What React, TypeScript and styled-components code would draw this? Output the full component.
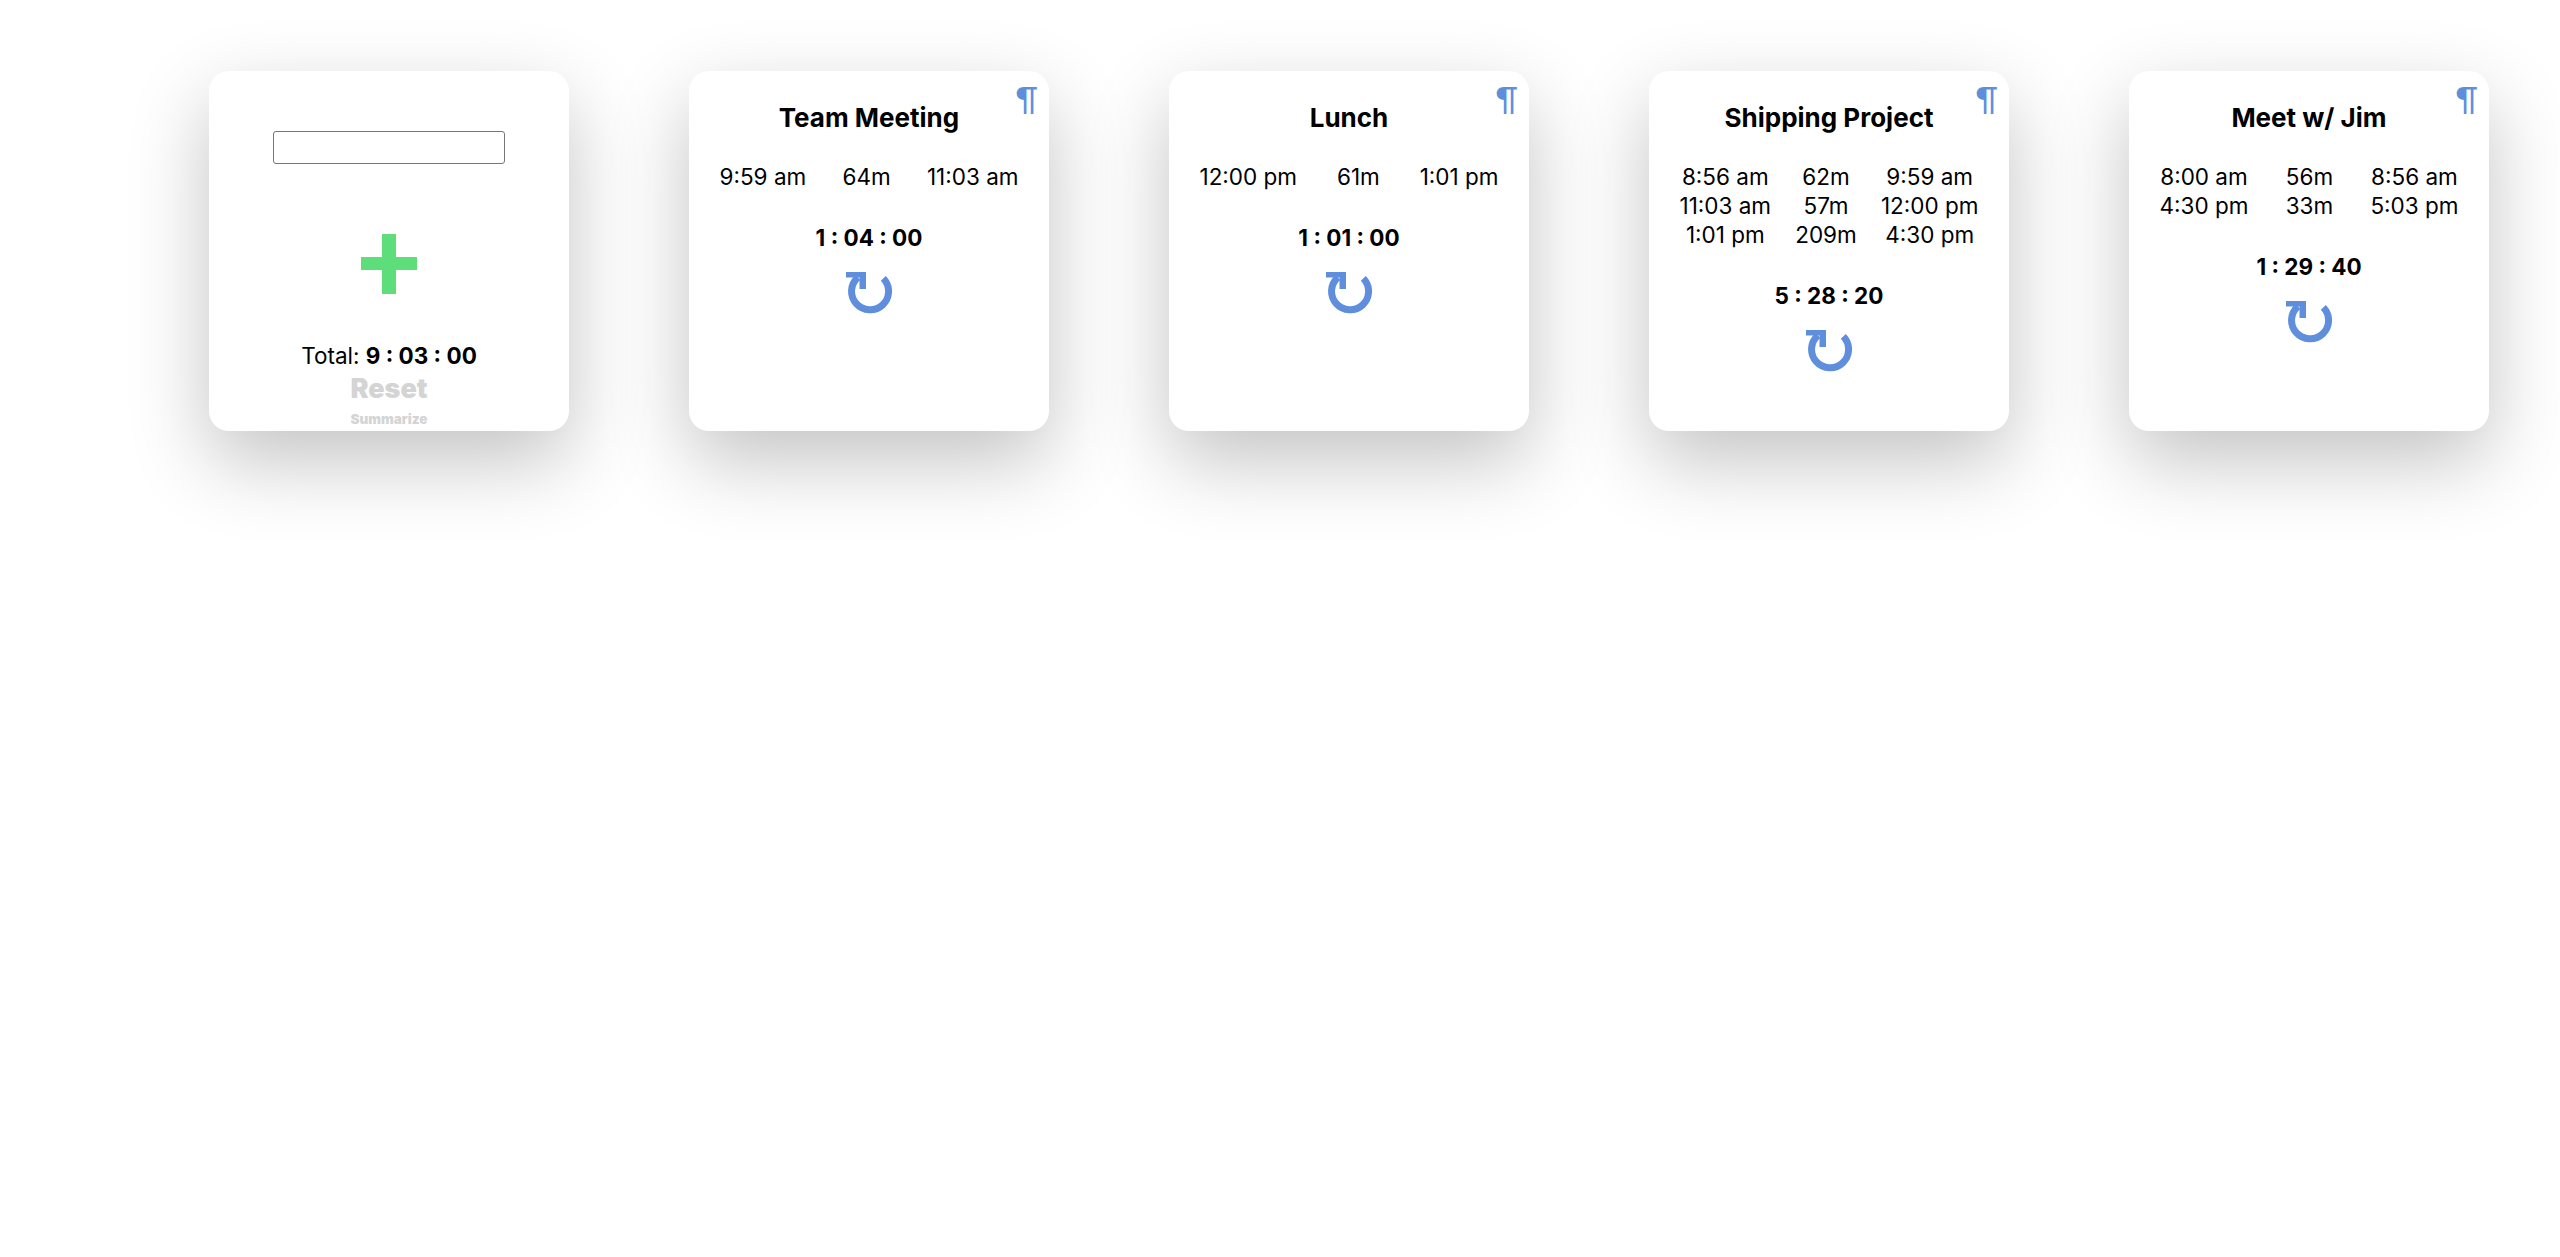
import React from "react";
import styled, { createGlobalStyle } from "styled-components";

const Global = createGlobalStyle`
  html, body, #root { margin: 0; padding: 0; background: #fff; min-height: 100vh; }
  body { font-family: Inter, Lato, sans-serif; color: #000; }
`;

const Board = styled.main`
  display: flex;
  gap: 120px;
  padding: 71px 0 0 209px;
`;

const Card = styled.section`
  position: relative;
  box-sizing: border-box;
  width: 360px;
  height: 360px;
  border-radius: 20px;
  background: #fff;
  box-shadow: 0 30px 80px rgba(0, 0, 0, 0.24);
  display: flex;
  flex-direction: column;
  align-items: center;
`;

const NameInput = styled.input`
  box-sizing: border-box;
  width: 232px;
  height: 33px;
  margin-top: 60px;
  border: 1px solid #767676;
  border-radius: 3px;
  padding: 1px 2px;
  background: #fff;
`;

const AddIcon = styled.svg`
  display: block;
  width: 56px;
  height: 60px;
  margin-top: 70px;
`;

const TotalLine = styled.div`
  margin-top: 47px;
  font-size: 22.5px;
  line-height: 29px;
`;

const Strong = styled.strong`
  font-weight: 700;
`;

const ResetText = styled.div`
  margin-top: 2px;
  font-size: 27px;
  line-height: 34px;
  font-weight: 900;
  color: #d4d4d4;
`;

const SummarizeText = styled.div`
  font-size: 13.5px;
  line-height: 20px;
  margin-top: 3px;
  font-weight: 900;
  color: #d4d4d4;
`;

const Pilcrow = styled.span`
  position: absolute;
  top: 8px;
  right: 11px;
  font-family: Lato, sans-serif;
  font-size: 32px;
  line-height: 40px;
  color: #5f8fdc;
  font-weight: 400;
`;

const Title = styled.h2`
  margin: 30px 0 0;
  font-size: 26px;
  line-height: 34px;
  font-weight: 700;
`;

const Times = styled.div`
  display: grid;
  grid-template-columns: auto auto auto;
  justify-content: space-between;
  width: 299px;
  margin-top: 27px;
  font-size: 22.5px;
  line-height: 29px;
  text-align: center;
`;

const Elapsed = styled.div`
  margin-top: 32px;
  font-size: 22.5px;
  line-height: 29px;
  font-weight: 700;
`;

const RefreshIcon = styled.svg`
  display: block;
  width: 46px;
  height: 42px;
  margin-top: 20px;
`;

type Task = { title: string; elapsed: string; rows: string[][] };

const tasks: Task[] = [
  { title: "Team Meeting", elapsed: "1 : 04 : 00", rows: [["9:59 am", "64m", "11:03 am"]] },
  { title: "Lunch", elapsed: "1 : 01 : 00", rows: [["12:00 pm", "61m", "1:01 pm"]] },
  {
    title: "Shipping Project",
    elapsed: "5 : 28 : 20",
    rows: [
      ["8:56 am", "62m", "9:59 am"],
      ["11:03 am", "57m", "12:00 pm"],
      ["1:01 pm", "209m", "4:30 pm"],
    ],
  },
  {
    title: "Meet w/ Jim",
    elapsed: "1 : 29 : 40",
    rows: [
      ["8:00 am", "56m", "8:56 am"],
      ["4:30 pm", "33m", "5:03 pm"],
    ],
  },
];

const Refresh = () => (
  <RefreshIcon viewBox="0 0 46 42" aria-hidden="true">
    <path d="M12 5.3 A18.5 18.5 0 1 0 37.3 6.4" fill="none" stroke="#5f8fdc" strokeWidth="7" />
    <path d="M0 0 H20 V17 H13.5 V5.5 H0 Z" fill="#5f8fdc" />
  </RefreshIcon>
);

export default function App() {
  return (
    <>
      <Global />
      <Board>
        <Card>
          <NameInput type="text" />
          <AddIcon viewBox="0 0 56 60" aria-hidden="true">
            <path d="M21 0 H35 V23 H56 V36 H35 V60 H21 V36 H0 V23 H21 Z" fill="#5ede7a" />
          </AddIcon>
          <TotalLine>
            Total: <Strong>9 : 03 : 00</Strong>
          </TotalLine>
          <ResetText>Reset</ResetText>
          <SummarizeText>Summarize</SummarizeText>
        </Card>
        {tasks.map((t) => (
          <Card key={t.title}>
            <Pilcrow>¶</Pilcrow>
            <Title>{t.title}</Title>
            <Times>
              {t.rows.flat().map((c, i) => (
                <div key={i}>{c}</div>
              ))}
            </Times>
            <Elapsed>{t.elapsed}</Elapsed>
            <Refresh />
          </Card>
        ))}
      </Board>
    </>
  );
}
